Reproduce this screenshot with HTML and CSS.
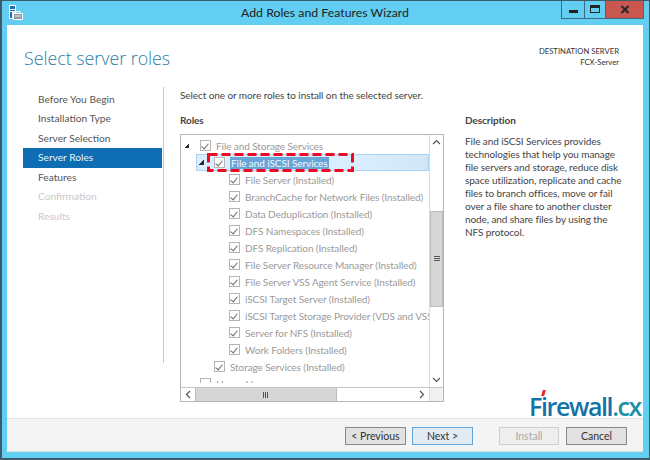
FILE: index.html
```html
<!DOCTYPE html>
<html lang="en">
<head>
    <meta charset="UTF-8">
    <title>Add Roles and Features Wizard</title>
    <link rel="stylesheet" href="styles.css">
</head>
<body>
    <div class="window">
        <div class="titlebar">
            <svg class="app-icon" width="14" height="15" viewBox="0 0 14 15">
                <path d="M0.500 0.500h6v13h-6z" fill="#e8f4fb" stroke="#fff"/>
                <path d="M1 1h5v3h-5z" fill="#1f6fb5"/>
                <path d="M1 5h5v1h-5zM1 7h2v6h-2z" fill="#1f6fb5"/>
                <path d="M4.500 8.500h9v6h-9z" fill="#8d98a0" stroke="#fff"/>
                <path d="M7 8.500v-2h4v2" fill="none" stroke="#fff"/>
                <path d="M6 11h6" stroke="#e8f4fb"/>
            </svg>
            <div class="title">Add Roles and Features Wizard</div>
            <div class="win-btns">
                <div class="win-btn"><span class="min-glyph"></span></div>
                <div class="win-btn max"><span class="max-glyph"></span></div>
                <div class="win-btn close">
                    <svg width="10" height="9" viewBox="0 0 10 9"><path d="M1.500 1l7 7M8.500 1l-7 7" stroke="#2a2a2a" stroke-width="2.200"/></svg>
                </div>
            </div>
        </div>

        <div class="client">
            <div class="header">
                <h1>Select server roles</h1>
                <div class="dest">
                    <div>DESTINATION SERVER</div>
                    <div>FCX-Server</div>
                </div>
            </div>

            <div class="body">
                <div class="nav">
                    <div class="nav-item">Before You Begin</div>
                    <div class="nav-item">Installation Type</div>
                    <div class="nav-item">Server Selection</div>
                    <div class="nav-item active">Server Roles</div>
                    <div class="nav-item">Features</div>
                    <div class="nav-item off">Confirmation</div>
                    <div class="nav-item off">Results</div>
                </div>

                <div class="main">
                    <div class="intro">Select one or more roles to install on the selected server.</div>
                    <div class="columns">
                        <div class="roles">
                            <div class="label">Roles</div>
                            <div class="treebox">
                                <div class="tree-area">
                                    <div class="tree">
                                        <div class="row lvl0"><span class="arrow"></span><span class="check"></span><span>File and Storage Services</span></div>
                                        <div class="row lvl1 selected"><span class="arrow"></span><span class="check"></span><span class="sel-text">File and iSCSI Services</span></div>
                                        <div class="row lvl2"><span class="check"></span><span>File Server (Installed)</span></div>
                                        <div class="row lvl2"><span class="check"></span><span>BranchCache for Network Files (Installed)</span></div>
                                        <div class="row lvl2"><span class="check"></span><span>Data Deduplication (Installed)</span></div>
                                        <div class="row lvl2"><span class="check"></span><span>DFS Namespaces (Installed)</span></div>
                                        <div class="row lvl2"><span class="check"></span><span>DFS Replication (Installed)</span></div>
                                        <div class="row lvl2"><span class="check"></span><span>File Server Resource Manager (Installed)</span></div>
                                        <div class="row lvl2"><span class="check"></span><span>File Server VSS Agent Service (Installed)</span></div>
                                        <div class="row lvl2"><span class="check"></span><span>iSCSI Target Server (Installed)</span></div>
                                        <div class="row lvl2"><span class="check"></span><span>iSCSI Target Storage Provider (VDS and VSS</span></div>
                                        <div class="row lvl2"><span class="check"></span><span>Server for NFS (Installed)</span></div>
                                        <div class="row lvl2"><span class="check"></span><span>Work Folders (Installed)</span></div>
                                        <div class="row lvl1b"><span class="check"></span><span>Storage Services (Installed)</span></div>
                                        <div class="row lvl0b"><span class="check empty"></span><span>Hyper-V</span></div>
                                    </div>
                                    <div class="vscroll">
                                        <div class="sb-btn">
                                            <svg width="9" height="6" viewBox="0 0 9 6"><path d="M1 5l3.500-3.500 3.500 3.500" fill="none" stroke="#555" stroke-width="1.200"/></svg>
                                        </div>
                                        <div class="vtrack">
                                            <div class="vthumb">
                                                <svg width="6" height="6" viewBox="0 0 6 6"><path d="M0 .5h6M0 2.500h6M0 4.500h6" stroke="#555"/></svg>
                                            </div>
                                        </div>
                                        <div class="sb-btn">
                                            <svg width="9" height="6" viewBox="0 0 9 6"><path d="M1 1l3.500 3.500 3.500-3.500" fill="none" stroke="#555" stroke-width="1.200"/></svg>
                                        </div>
                                    </div>
                                </div>
                                <div class="hscroll">
                                    <div class="sb-btn side">
                                        <svg width="6" height="9" viewBox="0 0 6 9"><path d="M5 1l-3.500 3.500 3.500 3.500" fill="none" stroke="#555" stroke-width="1.200"/></svg>
                                    </div>
                                    <div class="hthumb">
                                        <svg width="6" height="6" viewBox="0 0 6 6"><path d="M.5 0v6M2.500 0v6M4.500 0v6" stroke="#555"/></svg>
                                    </div>
                                    <div class="htrack"></div>
                                    <div class="sb-btn side">
                                        <svg width="6" height="9" viewBox="0 0 6 9"><path d="M1 1l3.500 3.500-3.500 3.500" fill="none" stroke="#555" stroke-width="1.200"/></svg>
                                    </div>
                                    <div class="corner"></div>
                                </div>
                            </div>
                        </div>
                        <div class="desc">
                            <div class="label">Description</div>
                            <p>File and iSCSI Services provides technologies that help you manage file servers and storage, reduce disk space utilization, replicate and cache files to branch offices, move or fail over a file share to another cluster node, and share files by using the NFS protocol.</p>
                        </div>
                    </div>
                </div>
            </div>

            <div class="footer">
                <button class="btn">&lt; Previous</button>
                <button class="btn next">Next &gt;</button>
                <button class="btn install" disabled>Install</button>
                <button class="btn">Cancel</button>
            </div>

            <svg class="callout" width="147" height="19" viewBox="0 0 147 19">
                <rect x="1.500" y="1.500" width="144" height="16" fill="none" stroke="#ec0b22" stroke-width="3" stroke-dasharray="9 4"/>
            </svg>
            <div class="logo">F<span class="logo-i">i</span>rewall<span class="logo-cx">.cx</span></div>
        </div>
    </div>
</body>
</html>
```

FILE: styles.css
```css
* {
    margin: 0;
    padding: 0;
    box-sizing: border-box;
}

body {
    width: 650px;
    height: 460px;
    overflow: hidden;
    font-family: Lato, "Open Sans", sans-serif;
    font-size: 10px;
    letter-spacing: -0.08px;
    color: #444;
    background: #fff;
}

.window {
    width: 650px;
    height: 460px;
    display: flex;
    flex-direction: column;
    background: #62cef1;
    border: solid #3f5a68;
    border-width: 1px 1px 2px 2px;
    padding: 0 6px 6px 5px;
}

.titlebar {
    height: 24px;
    flex: none;
    display: grid;
    grid-template-columns: 1fr auto 1fr;
    align-items: start;
}

.app-icon {
    margin: 4px 0 0 2px;
}

.title {
    font-size: 12.300px;
    letter-spacing: 0;
    line-height: 23px;
    color: #222;
}

.win-btns {
    justify-self: end;
    display: flex;
    margin-right: -1px;
    border: 1px solid #3b6b80;
    border-top: none;
    height: 18px;
}

.win-btn {
    width: 23px;
    display: flex;
    align-items: center;
    justify-content: center;
    border-right: 1px solid #3b6b80;
}

.win-btn.max {
    width: 21px;
}

.win-btn.close {
    width: 37px;
    background: #c9574d;
    border-right: none;
}

.min-glyph {
    width: 9px;
    height: 3px;
    background: #222;
    margin-top: 4px;
}

.max-glyph {
    width: 10px;
    height: 8px;
    border: 1px solid #222;
    border-top-width: 3px;
    margin-bottom: 2px;
}

.client {
    flex: 1;
    background: #fff;
    display: flex;
    flex-direction: column;
    position: relative;
    min-height: 0;
}

.header {
    height: 62px;
    padding: 20px 24px 0 17px;
    display: flex;
    justify-content: space-between;
    flex: none;
}

h1 {
    font-weight: 300;
    font-size: 17.800px;
    letter-spacing: 0;
    line-height: 26px;
    color: #2a7ea6;
    font-family: "Open Sans", sans-serif;
}

.dest {
    text-align: right;
    font-size: 7.700px;
    letter-spacing: 0;
    line-height: 10.500px;
    color: #333;
    margin-top: 1px;
}

.body {
    flex: 1;
    display: flex;
    min-height: 0;
}

.nav {
    width: 156px;
    flex: none;
    padding: 2.500px 0 0 16px;
    height: 274px;
}

.nav-item {
    height: 19.500px;
    line-height: 19.500px;
    padding-left: 15px;
    font-size: 10.200px;
    letter-spacing: 0;
    color: #555;
    margin-right: 1px;
}

.nav-item.active {
    background: #0f6db3;
    color: #e8f3fa;
}

.nav-item.off {
    color: #c9c9c9;
}

.main {
    flex: 1;
    border-left: 1px solid #c8c8c8;
    padding: 0 0 0 16px;
    height: 276px;
    min-width: 0;
}

.intro {
    line-height: 16px;
    color: #444;
}

.columns {
    display: flex;
    margin-top: 9px;
}

.roles {
    width: 264px;
    flex: none;
}

.label {
    font-weight: 700;
    line-height: 16px;
    color: #444;
}

.treebox {
    margin-top: 6px;
    height: 268px;
    border: 1px solid #b5b5b5;
    display: flex;
    flex-direction: column;
}

.tree-area {
    flex: 1;
    display: flex;
    min-height: 0;
}

.tree {
    flex: 1;
    overflow: hidden;
    margin-bottom: 4px;
    padding-top: 2px;
    min-width: 0;
}

.row {
    height: 17px;
    display: flex;
    align-items: center;
    white-space: nowrap;
    color: #9a9a9a;
}

.lvl0 { padding-left: 3px; }
.lvl1 { padding-left: 2px; }
.lvl2 { padding-left: 48px; }
.lvl1b { padding-left: 33px; }
.lvl0b { padding-left: 19px; }

.lvl0 .arrow { margin-right: 11px; }

.row.selected {
    background: linear-gradient(to right, #dbeeff 70%, #d3e6f8);
    border: 1px solid #a9d4f5;
    margin-left: 15px;
}

.sel-text {
    background: #6aa5d8;
    color: #f2f8fd;
    padding: 0 1px;
}

.arrow {
    width: 5px;
    height: 5px;
    margin-right: 10px;
    background: linear-gradient(135deg, transparent 50%, #2b2b2b 50%);
    flex: none;
}

.check {
    width: 11px;
    height: 11px;
    border: 1px solid #b5b5b5;
    margin-right: 5px;
    flex: none;
    position: relative;
    background: #fff;
}

.check::after {
    content: '';
    position: absolute;
    left: 2px;
    top: 1px;
    width: 3px;
    height: 6px;
    border: solid #6a6a6a;
    border-width: 0 1px 1px 0;
    transform: rotate(40deg);
}

.check.empty::after {
    display: none;
}

.vscroll {
    width: 14px;
    flex: none;
    display: flex;
    flex-direction: column;
    border-left: 1px solid #dcdcdc;
}

.sb-btn {
    height: 14px;
    flex: none;
    display: flex;
    align-items: center;
    justify-content: center;
    background: #fff;
}

.vtrack {
    flex: 1;
    padding-top: 62px;
    background: #fff;
}

.vthumb {
    height: 96px;
    background: #d6d6d6;
    border: 1px solid #bbb;
    display: flex;
    align-items: center;
    justify-content: center;
}

.hscroll {
    height: 14px;
    flex: none;
    display: flex;
    border-top: 1px solid #c4c4c4;
}

.sb-btn.side {
    width: 14px;
    height: 13px;
}

.hthumb {
    width: 142px;
    background: #d6d6d6;
    border: 1px solid #bbb;
    border-width: 0 1px;
    display: flex;
    align-items: center;
    justify-content: center;
}

.htrack {
    flex: 1;
}

.corner {
    width: 14px;
    background: #f0f0f0;
    border-left: 1px solid #dcdcdc;
}

.desc {
    margin-left: 21px;
    width: 160px;
    flex: none;
}

.desc p {
    margin-top: 7px;
    line-height: 13px;
    color: #444;
}

.footer {
    height: 34px;
    flex: none;
    display: flex;
    align-items: flex-start;
    background: #f4f4f4;
    border-top: 1px dotted #d4d4d4;
    border-bottom: 1px solid #d4e2e8;
    padding: 8px 0 0 338px;
}

.btn {
    width: 61px;
    height: 18px;
    font: inherit;
    font-size: 10.500px;
    color: #333;
    background: #e1e1e1;
    border: 1px solid #8a8a8a;
    margin-right: 6px;
}

.btn.next {
    background: #e3ebf2;
    border: 1px solid #5ea7e0;
    margin-right: 26px;
}

.btn.install {
    width: 60px;
    background: #eee;
    border-color: #d0d0d0;
    color: #aaa;
    margin-right: 7px;
}

.callout {
    position: absolute;
    left: 200px;
    top: 128px;
}

.logo {
    position: absolute;
    right: 2px;
    bottom: 34px;
    font-family: "Open Sans", sans-serif;
    font-size: 25px;
    font-weight: 600;
    line-height: 24px;
    letter-spacing: -1.400px;
    color: #1273a8;
    background: #fff;
}

.logo-i {
    position: relative;
}

.logo-i::before {
    content: '';
    position: absolute;
    left: 1px;
    top: 1px;
    width: 3px;
    height: 6px;
    background: #e8242c;
    transform: skewX(-15deg);
}

.logo-cx {
    color: #1f8fa8;
}
```
